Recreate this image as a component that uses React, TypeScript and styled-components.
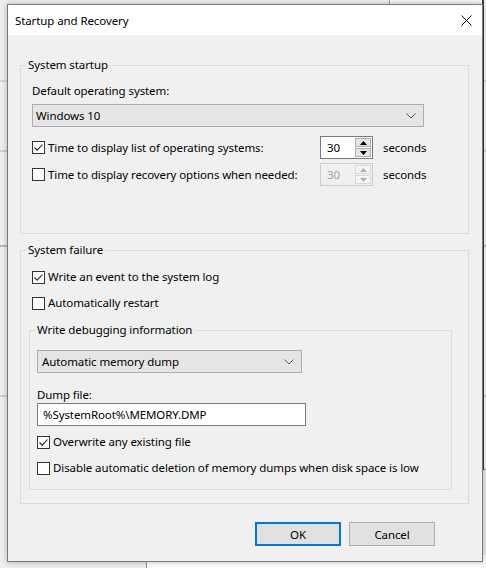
import React from "react";
import styled, { createGlobalStyle } from "styled-components";

const GlobalStyle = createGlobalStyle`
  html, body {
    margin: 0;
    padding: 0;
  }
  body {
    width: 486px;
    height: 568px;
    overflow: hidden;
    font-family: "Noto Sans", "Segoe UI", sans-serif;
    font-size: 11.5px;
    letter-spacing: -0.1px;
    color: #000;
  }
  * {
    box-sizing: border-box;
  }
`;

// ---- desktop behind the dialog ----

const Desktop = styled.div`
  position: relative;
  width: 486px;
  height: 568px;
  overflow: hidden;
  background: #ededed;
`;

const BackWindowLeft = styled.div`
  position: absolute;
  left: 0;
  top: 0;
  width: 390px;
  height: 560px;
  background: #f0f0f0;
  border-right: 1px solid #a0a0a0;
`;

const BackWindowRight = styled.div`
  position: absolute;
  left: 390px;
  top: 0;
  width: 96px;
  height: 470px;
  background: #f7f7f7;
  border-bottom: 1px solid #9a9a9a;
`;

const BackEdge = styled.div`
  position: absolute;
  left: 482px;
  top: 0;
  width: 2px;
  height: 470px;
  background: #3a3a3a;
`;

const BackBottom = styled.div`
  position: absolute;
  left: 146px;
  top: 555px;
  width: 340px;
  height: 13px;
  background: #ffffff;
  border-left: 1px solid #8a8a8a;
`;

const BackLine = styled.div<{ $top: number; $color: string }>`
  position: absolute;
  left: 0;
  top: ${(p) => p.$top}px;
  width: 486px;
  height: 2px;
  background: ${(p) => p.$color};
`;

// ---- dialog window ----

const Dialog = styled.div`
  position: absolute;
  left: 7px;
  top: 4px;
  width: 476px;
  height: 558px;
  background: #f0f0f0;
  border: 1px solid #7a7a7a;
  box-shadow: 0 0 6px rgba(0, 0, 0, 0.28);
  display: flex;
  flex-direction: column;
`;

const TitleBar = styled.div`
  height: 30px;
  flex: none;
  background: #ffffff;
  display: flex;
  align-items: center;
  justify-content: space-between;
  padding: 0 10px 0 7px;
`;

const CloseButton = styled.div`
  width: 12px;
  height: 12px;
  display: flex;
  align-items: center;
  justify-content: center;
`;

const Body = styled.div`
  flex: 1;
  padding: 22px 13px 0 12px;
  display: flex;
  flex-direction: column;
`;

const Group = styled.fieldset<{ $pad: string; $width: number; $mt?: number }>`
  margin: ${(p) => p.$mt ?? 0}px 0 0 0;
  padding: ${(p) => p.$pad};
  width: ${(p) => p.$width}px;
  border: 1px solid #dcdcdc;
  min-inline-size: 0;
  display: flex;
  flex-direction: column;
`;

// the legend sits inside the fieldset padding, so pull it back to 5px from the border
const Legend = styled.legend<{ $offset: number }>`
  margin-left: ${(p) => 5 - p.$offset}px;
  padding: 0 2px;
  line-height: 16px;
`;

const Label = styled.div<{ $mt?: number }>`
  line-height: 16px;
  margin-top: ${(p) => p.$mt ?? 0}px;
`;

const Select = styled.div<{ $width: number; $mt?: number; $pl: number }>`
  width: ${(p) => p.$width}px;
  height: 23px;
  margin-top: ${(p) => p.$mt ?? 0}px;
  background: #e5e5e5;
  border: 1px solid #adadad;
  display: flex;
  align-items: center;
  justify-content: space-between;
  padding: 0 7px 0 ${(p) => p.$pl}px;
`;

const TextBox = styled.div`
  width: 269px;
  height: 23px;
  background: #ffffff;
  border: 1px solid #7a7a7a;
  display: flex;
  align-items: center;
  padding-left: 5px;
`;

const TimeRow = styled.div<{ $mt: number }>`
  display: grid;
  grid-template-columns: 288px 53px auto;
  align-items: center;
  height: 23px;
  margin-top: ${(p) => p.$mt}px;
`;

const Seconds = styled.span`
  padding-left: 10px;
`;

const CheckRow = styled.label<{ $mt?: number; $indent?: number }>`
  display: flex;
  align-items: center;
  gap: 3px;
  line-height: 16px;
  margin-top: ${(p) => p.$mt ?? 0}px;
  margin-left: ${(p) => p.$indent ?? 0}px;
`;

const Box = styled.span`
  width: 13px;
  height: 13px;
  flex: none;
  background: #ffffff;
  border: 1px solid #333333;
  display: flex;
  align-items: center;
  justify-content: center;
`;

const Spin = styled.div<{ $disabled?: boolean }>`
  width: 53px;
  height: 23px;
  display: flex;
  background: ${(p) => (p.$disabled ? "#f0f0f0" : "#ffffff")};
  border: 1px solid ${(p) => (p.$disabled ? "#cccccc" : "#7a7a7a")};
  color: ${(p) => (p.$disabled ? "#a0a0a0" : "#000000")};
`;

const SpinValue = styled.div`
  flex: 1;
  display: flex;
  align-items: center;
  padding-left: 6px;
`;

const SpinButtons = styled.div`
  width: 17px;
  display: flex;
  flex-direction: column;
  gap: 1px;
  padding: 1px 1px 1px 0;
`;

const SpinButton = styled.div<{ $disabled?: boolean }>`
  flex: 1;
  background: ${(p) => (p.$disabled ? "#f4f4f4" : "#e5e5e5")};
  border: 1px solid ${(p) => (p.$disabled ? "#d9d9d9" : "#adadad")};
  display: flex;
  align-items: center;
  justify-content: center;
`;

const ButtonRow = styled.div`
  display: flex;
  justify-content: flex-end;
  gap: 8px;
  margin-top: 18px;
  padding-right: 34px;
`;

const Button = styled.div<{ $default?: boolean }>`
  width: 86px;
  height: 24px;
  background: #e1e1e1;
  border: ${(p) => (p.$default ? "2px solid #0078d7" : "1px solid #adadad")};
  display: flex;
  align-items: center;
  justify-content: center;
`;

const Chevron = () => (
  <svg width="10" height="6" viewBox="0 0 10 6">
    <path d="M0.5 0.5 L5 5 L9.5 0.5" fill="none" stroke="#5a5a5a" strokeWidth="1" />
  </svg>
);

const Check = () => (
  <svg width="11" height="11" viewBox="0 0 11 11">
    <path d="M1.5 5.5 L4.2 8.2 L9.5 2.5" fill="none" stroke="#222" strokeWidth="1.1" />
  </svg>
);

const Arrow = ({ up, color }: { up?: boolean; color: string }) => (
  <svg width="7" height="4" viewBox="0 0 7 4">
    <path d={up ? "M0 4 L3.5 0 L7 4 Z" : "M0 0 L3.5 4 L7 0 Z"} fill={color} />
  </svg>
);

const Checkbox: React.FC<{ checked?: boolean; text: string; mt?: number; indent?: number }> = ({
  checked,
  text,
  mt,
  indent,
}) => (
  <CheckRow $mt={mt} $indent={indent}>
    <Box>{checked && <Check />}</Box>
    <span>{text}</span>
  </CheckRow>
);

const SpinBox: React.FC<{ value: string; disabled?: boolean }> = ({ value, disabled }) => {
  const c = disabled ? "#b0b0b0" : "#000";
  return (
    <Spin $disabled={disabled}>
      <SpinValue>{value}</SpinValue>
      <SpinButtons>
        <SpinButton $disabled={disabled}>
          <Arrow up color={c} />
        </SpinButton>
        <SpinButton $disabled={disabled}>
          <Arrow color={c} />
        </SpinButton>
      </SpinButtons>
    </Spin>
  );
};

export default function App() {
  return (
    <Desktop>
      <GlobalStyle />
      <BackWindowLeft />
      <BackWindowRight />
      <BackLine $top={80} $color="#d8d8d8" />
      <BackLine $top={150} $color="#c9d3de" />
      <BackLine $top={245} $color="#b8b8b8" />
      <BackLine $top={395} $color="#c5d0dc" />
      <BackEdge />
      <BackBottom />
      <Dialog>
        <TitleBar>
          <span>Startup and Recovery</span>
          <CloseButton>
            <svg width="11" height="11" viewBox="0 0 11 11">
              <path d="M0.5 0.5 L10.5 10.5 M10.5 0.5 L0.5 10.5" stroke="#000" strokeWidth="1" />
            </svg>
          </CloseButton>
        </TitleBar>
        <Body>
          <Group $pad="10px 0 47px 11px" $width={449}>
            <Legend $offset={11}>System startup</Legend>
            <Label>Default operating system:</Label>
            <Select $width={392} $mt={5} $pl={3}>
              <span>Windows 10</span>
              <Chevron />
            </Select>
            <TimeRow $mt={9}>
              <Checkbox checked text="Time to display list of operating systems:" />
              <SpinBox value="30" />
              <Seconds>seconds</Seconds>
            </TimeRow>
            <TimeRow $mt={4}>
              <Checkbox text="Time to display recovery options when needed:" />
              <SpinBox value="30" disabled />
              <Seconds>seconds</Seconds>
            </TimeRow>
          </Group>

          <Group $pad="11px 16px 13px 8px" $width={449} $mt={8}>
            <Legend $offset={8}>System failure</Legend>
            <Checkbox checked text="Write an event to the system log" indent={3} />
            <Checkbox text="Automatically restart" mt={10} indent={3} />
            <Group $pad="12px 0 13px 7px" $width={423} $mt={11}>
              <Legend $offset={7}>Write debugging information</Legend>
              <Select $width={265} $pl={4}>
                <span>Automatic memory dump</span>
                <Chevron />
              </Select>
              <Label $mt={14}>Dump file:</Label>
              <TextBox>%SystemRoot%\MEMORY.DMP</TextBox>
              <Checkbox checked text="Overwrite any existing file" mt={8} />
              <Checkbox text="Disable automatic deletion of memory dumps when disk space is low" mt={10} />
            </Group>
          </Group>

          <ButtonRow>
            <Button $default>OK</Button>
            <Button>Cancel</Button>
          </ButtonRow>
        </Body>
      </Dialog>
    </Desktop>
  );
}
